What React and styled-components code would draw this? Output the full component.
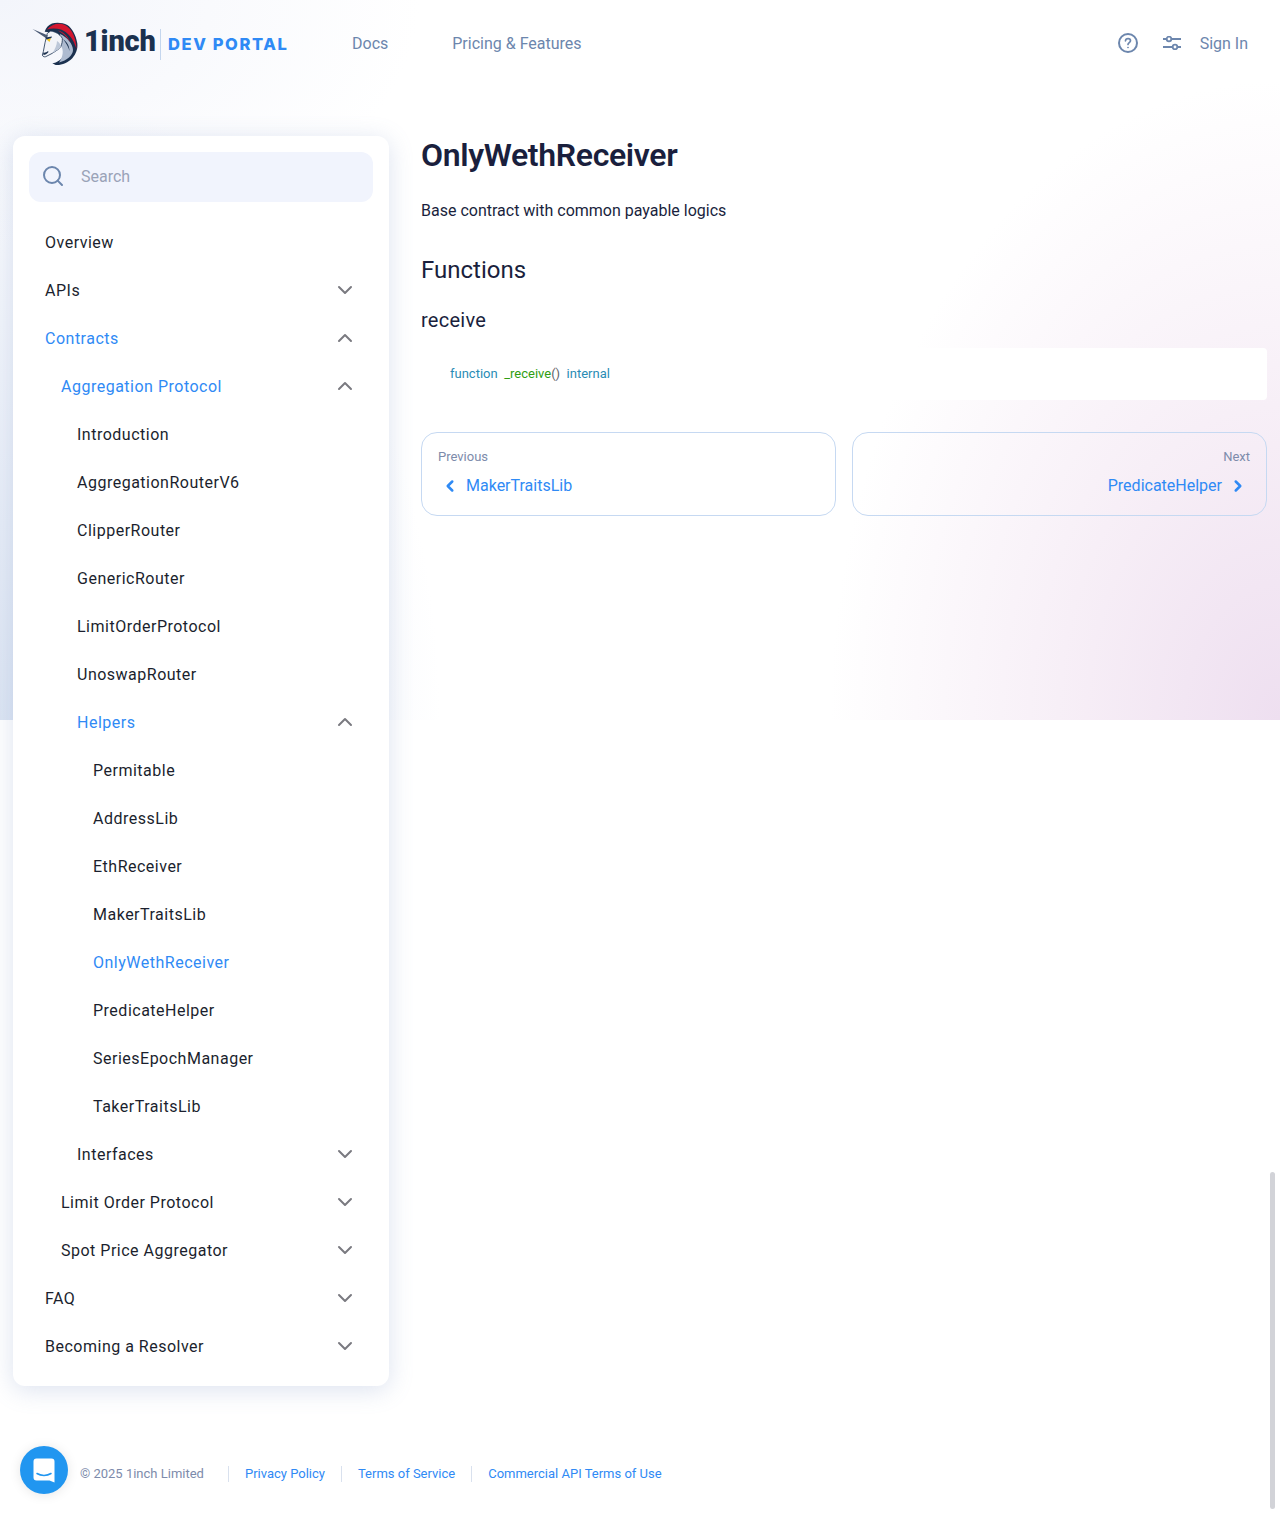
import styled, { createGlobalStyle } from "styled-components";
import { ChevronDown, ChevronUp, ChevronLeft, ChevronRight, Search } from "lucide-react";

const GlobalStyle = createGlobalStyle`
  html, body {
    margin: 0;
    padding: 0;
  }
  body {
    font-family: Roboto, "Liberation Sans", sans-serif;
    color: #1b1f3a;
    background-color: #fff;
    background-image:
      radial-gradient(ellipse 420px 260px at 0% 0%, #f3f5fb 0%, rgba(255, 255, 255, 0) 100%),
      radial-gradient(ellipse 440px 640px at 0% 100%, #dce5f3 0%, rgba(226, 233, 246, 0.65) 45%, rgba(255, 255, 255, 0) 100%),
      radial-gradient(ellipse 450px 640px at 100% 100%, #eedff0 0%, rgba(243, 231, 243, 0.72) 45%, rgba(255, 255, 255, 0) 100%);
    background-size: 100% 720px;
    background-repeat: no-repeat;
  }
`;

const Page = styled.div`
  position: relative;
  height: 1514px;
  overflow: hidden;
  display: flex;
  flex-direction: column;
`;

const Header = styled.header`
  display: flex;
  align-items: center;
  height: 86px;
  padding: 0 32px;
`;

const Logo = styled.div`
  display: flex;
  align-items: center;
  width: 256px;
`;

const UnicornMark = styled.svg`
  display: block;
  flex: none;
  margin-top: 2px;
`;

const WordMark = styled.span`
  font-family: Roboto, sans-serif;
  font-weight: 900;
  font-size: 29px;
  line-height: 30px;
  letter-spacing: -0.200px;
  color: #1b314f;
  margin: -4px 0 0 6px;
  width: 70px;
`;

const LogoDivider = styled.span`
  flex: none;
  width: 1px;
  height: 31px;
  background: #c4d6ee;
  margin: 3px 7px 0 6px;
`;

const PortalName = styled.span`
  font-family: Inter, sans-serif;
  font-weight: 800;
  font-size: 16.500px;
  line-height: 20px;
  letter-spacing: 1.600px;
  color: #2f8af5;
  white-space: nowrap;
  margin-top: 2px;
`;

const Nav = styled.nav`
  display: flex;
  gap: 64px;
  margin-left: 64px;
  flex: 1;
`;

const NavLink = styled.a`
  font-size: 16px;
  color: #6c86ad;
`;

const HeaderActions = styled.div`
  display: flex;
  align-items: center;
`;

const ActionIcon = styled.svg`
  display: block;
  color: #6c86ad;
  margin-right: ${(p) => p.$gap}px;
`;

const Content = styled.div`
  display: flex;
  align-items: flex-start;
  gap: 32px;
  padding: 50px 13px 0;
`;

const Sidebar = styled.aside`
  flex: none;
  width: 376px;
  box-sizing: border-box;
  padding: 16px;
  background: #fff;
  border-radius: 12px;
  box-shadow: 0 4px 24px rgba(108, 134, 190, 0.24);
`;

const SearchBox = styled.div`
  display: flex;
  align-items: center;
  gap: 16px;
  height: 50px;
  box-sizing: border-box;
  padding: 0 12px 2px;
  margin-bottom: 16px;
  border-radius: 12px;
  background: #f1f4fd;
  font-size: 16px;
  color: #9aa3b8;

  svg {
    color: #6c86ad;
  }
`;

const Row = styled.div`
  display: flex;
  align-items: center;
  justify-content: space-between;
  height: 48px;
  padding: 0 16px 0 ${(p) => 16 + p.$level * 16}px;
  font-size: 16px;
  letter-spacing: 0.500px;
  color: ${(p) => (p.$active ? "#2f8af5" : "#1b1f2e")};

  svg {
    color: #7a7a80;
  }
`;

const Main = styled.main`
  flex: 1;
  min-width: 0;
`;

const Title = styled.h1`
  margin: 0;
  font-size: 32px;
  line-height: 38px;
  font-weight: 600;
  letter-spacing: -0.350px;
  color: #1a1f3d;
`;

const Description = styled.p`
  margin: 25px 0 0;
  font-size: 16px;
  line-height: 24px;
  color: #1a1f3d;
`;

const SectionTitle = styled.h2`
  margin: 31px 0 0;
  font-size: 24px;
  line-height: 32px;
  font-weight: 400;
  color: #1a1f3d;
`;

const FunctionName = styled.h3`
  margin: 20px 0 0;
  font-size: 20px;
  line-height: 28px;
  font-weight: 400;
  letter-spacing: 0.250px;
  color: #1a1f3d;
`;

const CodeBlock = styled.div`
  margin-top: 14px;
  height: 52px;
  box-sizing: border-box;
  padding: 0 29px 2px;
  display: flex;
  align-items: center;
  background: #fff;
  border-radius: 4px;
`;

const Code = styled.code`
  font-family: Roboto, sans-serif;
  font-size: 13px;
  white-space: pre;
  color: #5f6368;
`;

const Token = styled.span`
  color: ${(p) => p.$color};
`;

const Pager = styled.div`
  display: grid;
  grid-template-columns: 1fr 1fr;
  gap: 16px;
  margin-top: 32px;
`;

const PagerCard = styled.a`
  display: flex;
  flex-direction: column;
  align-items: ${(p) => (p.$end ? "flex-end" : "flex-start")};
  height: 84px;
  box-sizing: border-box;
  padding: 15px 16px;
  border: 1px solid #c6d9f2;
  border-radius: 16px;
`;

const PagerLabel = styled.span`
  font-size: 13px;
  line-height: 18px;
  color: #7d8bab;
`;

const PagerLink = styled.span`
  display: flex;
  align-items: center;
  gap: 4px;
  margin-top: 9px;
  font-size: 16px;
  line-height: 22px;
  color: #2f8af5;

  svg {
    display: block;
    margin: 0 3px;
  }
`;

const Footer = styled.footer`
  display: flex;
  align-items: center;
  margin-top: 80px;
  padding-left: 80px;
  font-size: 13px;
  line-height: 16px;
`;

const Copyright = styled.span`
  color: #7d8bab;
  margin-right: 24px;
`;

const FooterLink = styled.a`
  color: #2f8af5;
  padding: 0 16px;
  border-left: 1px solid #d9e1ee;
`;

const ChatButton = styled.div`
  position: absolute;
  left: 20px;
  top: 1446px;
  width: 48px;
  height: 48px;
  display: flex;
  align-items: center;
  justify-content: center;
  border-radius: 50%;
  background: #2196f0;
  box-shadow: 0 1px 12px rgba(0, 0, 0, 0.1);
`;

const ScrollThumb = styled.div`
  position: absolute;
  left: 1270px;
  top: 1172px;
  width: 5px;
  height: 337px;
  border-radius: 3px;
  background: #d2d3d8;
`;

const menu = [
  { label: "Overview", level: 0 },
  { label: "APIs", level: 0, chevron: "down" },
  { label: "Contracts", level: 0, chevron: "up", active: true },
  { label: "Aggregation Protocol", level: 1, chevron: "up", active: true },
  { label: "Introduction", level: 2 },
  { label: "AggregationRouterV6", level: 2 },
  { label: "ClipperRouter", level: 2 },
  { label: "GenericRouter", level: 2 },
  { label: "LimitOrderProtocol", level: 2 },
  { label: "UnoswapRouter", level: 2 },
  { label: "Helpers", level: 2, chevron: "up", active: true },
  { label: "Permitable", level: 3 },
  { label: "AddressLib", level: 3 },
  { label: "EthReceiver", level: 3 },
  { label: "MakerTraitsLib", level: 3 },
  { label: "OnlyWethReceiver", level: 3, active: true },
  { label: "PredicateHelper", level: 3 },
  { label: "SeriesEpochManager", level: 3 },
  { label: "TakerTraitsLib", level: 3 },
  { label: "Interfaces", level: 2, chevron: "down" },
  { label: "Limit Order Protocol", level: 1, chevron: "down" },
  { label: "Spot Price Aggregator", level: 1, chevron: "down" },
  { label: "FAQ", level: 0, chevron: "down" },
  { label: "Becoming a Resolver", level: 0, chevron: "down" },
];

function Unicorn() {
  return (
    <UnicornMark width="46" height="44" viewBox="0 0 46 44">
      {/* mane and neck crescent */}
      <path
        fill="#1b314f"
        d="M12.700 9.700C14 6 16 3 20 1.500C24 0 31 0.500 35.300 3C40 6 44 13 45.300 21.300C46 27 44 32 40.300 36.300C36 41 29 43.500 23.700 43L20.300 41.300C25 41 30 37 32.700 33C34 26 30 15 25 11Z"
      />
      {/* grey neck */}
      <path
        fill="#aebbd0"
        d="M28 12C35 15 41 22 41 28C41 33 35 38.500 27 40.500C31 35 32 28 29 24Z"
      />
      <path fill="#1b314f" d="M31 17C35 20 37.500 24 37.500 29C36.500 25 34 21 31 17Z" />
      {/* face */}
      <path
        fill="#f1f3f8"
        stroke="#1b314f"
        strokeWidth="0.800"
        strokeLinejoin="round"
        d="M15.300 11.300C13.500 17 12.500 24 11.300 29.700L10.300 33C11 35 12.500 35 13.700 34.700C16 33.500 18 32.500 20.300 31.300L25.300 28C27 27 28 26 28.700 24.700C30 22 30.500 19 30.300 16.300C29 14 27 12.500 25.300 11.300C23 10 21 9.300 18.700 9Z"
      />
      {/* cheek shading */}
      <path fill="#bcc7d8" d="M20.300 31.300L25.300 28C27 27 28 26 28.700 24.700C28.500 22 27 20 25 19C25 23 23 27 20.300 31.300Z" />
      {/* muzzle */}
      <path fill="#1b314f" d="M11 30.500C12.500 31 14.500 30.500 16 29L16.500 30C15 32 13 33 11.500 33Z" />
      {/* horn */}
      <path fill="#4a5a75" d="M0.500 7L16 13.500L14.500 16.500Z" />
      {/* red mane stripes */}
      <path
        fill="#d3162f"
        d="M15 7.500C19 2.500 25 1 30 2C38 4 44 13 44.500 27C41.500 17 36 10 29 7.500C24 6 19 6 15 7.500Z"
      />
      <path fill="#d3162f" d="M26 8.500C31 9.500 36 14 38 20C35 15 31 11 26 8.500Z" />
      {/* eye */}
      <path fill="#f5c518" d="M14.500 17.500L19 16L17.500 20Z" />
      <path fill="#1b314f" d="M13.500 15.500L20 14.500L19.300 16L14.500 17.500Z" />
    </UnicornMark>
  );
}

function ChatGlyph() {
  return (
    <svg width="22" height="25" viewBox="0 0 22 25">
      <path
        fill="#fff"
        d="M3.500 0.500H18.500A3 3 0 0 1 21.500 3.500V24.500L16.500 22.500H3.500A3 3 0 0 1 0.500 19.500V3.500A3 3 0 0 1 3.500 0.500Z"
      />
      <path fill="none" stroke="#2196f0" strokeWidth="1.500" strokeLinecap="round" d="M4 15.500C8 18 14 18 18 15.500" />
    </svg>
  );
}

export default function App() {
  return (
    <Page>
      <GlobalStyle />
      <Header>
        <Logo>
          <Unicorn />
          <WordMark>1inch</WordMark>
          <LogoDivider />
          <PortalName>DEV PORTAL</PortalName>
        </Logo>
        <Nav>
          <NavLink>Docs</NavLink>
          <NavLink>Pricing &amp; Features</NavLink>
        </Nav>
        <HeaderActions>
          <ActionIcon $gap={25} width="20" height="20" viewBox="0 0 20 20" fill="none" stroke="currentColor">
            <circle cx="10" cy="10" r="9" strokeWidth="2" />
            <path strokeWidth="1.700" strokeLinecap="round" d="M7.500 7.800C7.700 5 12.500 5 12.500 7.800C12.500 9.600 10 9.700 10 11.500" />
            <circle cx="10" cy="14.500" r="0.500" fill="currentColor" strokeWidth="0.800" />
          </ActionIcon>
          <ActionIcon $gap={19} width="18" height="14" viewBox="0 0 18 14" fill="none" stroke="currentColor" strokeWidth="2">
            <path d="M0 3H18M0 11H18" />
            <circle cx="6" cy="3" r="2.300" fill="#fff" strokeWidth="1.800" />
            <circle cx="12" cy="11" r="2.300" fill="#fff" strokeWidth="1.800" />
          </ActionIcon>
          <NavLink>Sign In</NavLink>
        </HeaderActions>
      </Header>

      <Content>
        <Sidebar>
          <SearchBox>
            <Search size={24} strokeWidth={2} />
            Search
          </SearchBox>
          {menu.map((item) => (
            <Row key={item.label} $level={item.level} $active={item.active}>
              {item.label}
              {item.chevron === "down" && <ChevronDown size={24} strokeWidth={2} />}
              {item.chevron === "up" && <ChevronUp size={24} strokeWidth={2} />}
            </Row>
          ))}
        </Sidebar>

        <Main>
          <Title>OnlyWethReceiver</Title>
          <Description>Base contract with common payable logics</Description>
          <SectionTitle>Functions</SectionTitle>
          <FunctionName>receive</FunctionName>
          <CodeBlock>
            <Code>
              <Token $color="#2a8cb5">function</Token>
              {"  "}
              <Token $color="#2f9e12">_receive</Token>
              {"()  "}
              <Token $color="#2a8cb5">internal</Token>
            </Code>
          </CodeBlock>
          <Pager>
            <PagerCard>
              <PagerLabel>Previous</PagerLabel>
              <PagerLink>
                <ChevronLeft size={18} strokeWidth={3.400} />
                <span>MakerTraitsLib</span>
              </PagerLink>
            </PagerCard>
            <PagerCard $end>
              <PagerLabel>Next</PagerLabel>
              <PagerLink>
                <span>PredicateHelper</span>
                <ChevronRight size={18} strokeWidth={3.400} />
              </PagerLink>
            </PagerCard>
          </Pager>
        </Main>
      </Content>

      <Footer>
        <Copyright>© 2025 1inch Limited</Copyright>
        <FooterLink>Privacy Policy</FooterLink>
        <FooterLink>Terms of Service</FooterLink>
        <FooterLink>Commercial API Terms of Use</FooterLink>
      </Footer>

      <ChatButton>
        <ChatGlyph />
      </ChatButton>
      <ScrollThumb />
    </Page>
  );
}
